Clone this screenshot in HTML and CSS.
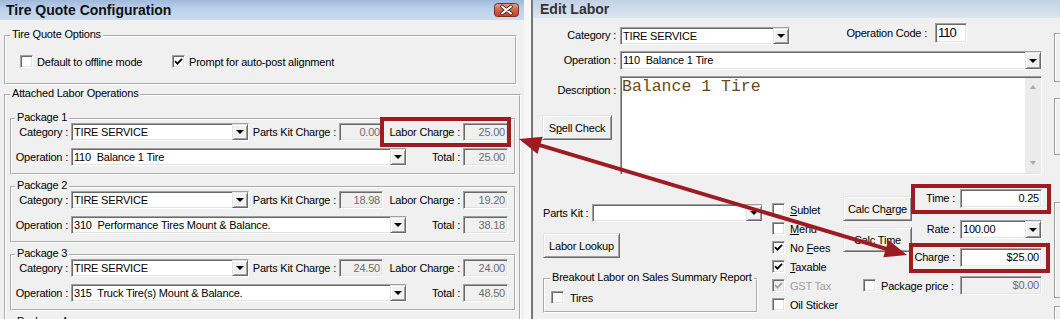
FILE: index.html
```html
<!DOCTYPE html>
<html lang="en">
<head>
    <meta charset="UTF-8">
    <title>Tire Quote Configuration - Edit Labor</title>
    <link rel="stylesheet" href="styles.css">
</head>
<body>

<div class="desk">

    <!-- left window -->
    <div class="win win-quote">
        <div class="titlebar">
            <span>Tire Quote Configuration</span>
            <span class="close-btn">
                <svg width="25" height="14" viewBox="0 0 25 14">
                    <defs>
                        <linearGradient id="closeFill" x1="0" y1="0" x2="0" y2="1">
                            <stop offset="0" stop-color="#e4a08e"/>
                            <stop offset="0.45" stop-color="#d06a52"/>
                            <stop offset="1" stop-color="#b9432b"/>
                        </linearGradient>
                    </defs>
                    <rect x="0.5" y="0.5" width="24" height="13" rx="3" fill="url(#closeFill)" stroke="#7b2e1e"/>
                    <path d="M8 3.5 L17 10.5 M17 3.5 L8 10.5" stroke="#5a2014" stroke-width="3.6" stroke-linecap="round"/>
                    <path d="M8 3.5 L17 10.5 M17 3.5 L8 10.5" stroke="#fff" stroke-width="2" stroke-linecap="round"/>
                </svg>
            </span>
        </div>

        <div class="quote-body">
            <div class="group options">
                <div class="group-title">Tire Quote Options</div>
                <div class="options-row">
                    <div class="check wide"><span class="box"></span><span>Default to offline mode</span></div>
                    <div class="check"><span class="box"><svg width="9" height="9" viewBox="0 0 9 9"><polyline points="1,4.2 3.4,6.6 8,1.8" fill="none" stroke="#000" stroke-width="1.8"/></svg></span><span>Prompt for auto-post alignment</span></div>
                </div>
            </div>

            <div class="group attached">
                <div class="group-title">Attached Labor Operations</div>

                <div class="group package">
                    <div class="group-title">Package 1</div>
                    <div class="pkg-row">
                        <span class="pkg-label">Category :</span>
                        <div class="field select cat"><span>TIRE SERVICE</span><i class="drop"></i></div>
                        <span class="pkg-label kit">Parts Kit Charge :</span>
                        <div class="field off num kit-in">0.00</div>
                        <span class="pkg-label labor">Labor Charge :</span>
                        <div class="field off num money">25.00</div>
                    </div>
                    <div class="pkg-row">
                        <span class="pkg-label">Operation :</span>
                        <div class="field select op"><span>110  Balance 1 Tire</span><i class="drop"></i></div>
                        <span class="pkg-label total">Total :</span>
                        <div class="field off num money">25.00</div>
                    </div>
                </div>

                <div class="group package">
                    <div class="group-title">Package 2</div>
                    <div class="pkg-row">
                        <span class="pkg-label">Category :</span>
                        <div class="field select cat"><span>TIRE SERVICE</span><i class="drop"></i></div>
                        <span class="pkg-label kit">Parts Kit Charge :</span>
                        <div class="field off num kit-in">18.98</div>
                        <span class="pkg-label labor">Labor Charge :</span>
                        <div class="field off num money">19.20</div>
                    </div>
                    <div class="pkg-row">
                        <span class="pkg-label">Operation :</span>
                        <div class="field select op"><span>310  Performance Tires Mount &amp; Balance.</span><i class="drop"></i></div>
                        <span class="pkg-label total">Total :</span>
                        <div class="field off num money">38.18</div>
                    </div>
                </div>

                <div class="group package">
                    <div class="group-title">Package 3</div>
                    <div class="pkg-row">
                        <span class="pkg-label">Category :</span>
                        <div class="field select cat"><span>TIRE SERVICE</span><i class="drop"></i></div>
                        <span class="pkg-label kit">Parts Kit Charge :</span>
                        <div class="field off num kit-in">24.50</div>
                        <span class="pkg-label labor">Labor Charge :</span>
                        <div class="field off num money">24.00</div>
                    </div>
                    <div class="pkg-row">
                        <span class="pkg-label">Operation :</span>
                        <div class="field select op"><span>315  Truck Tire(s) Mount &amp; Balance.</span><i class="drop"></i></div>
                        <span class="pkg-label total">Total :</span>
                        <div class="field off num money">48.50</div>
                    </div>
                </div>

                <div class="group package">
                    <div class="group-title">Package 4</div>
                </div>
            </div>
        </div>
    </div>

    <!-- right window -->
    <div class="win win-labor">
        <div class="titlebar">Edit Labor</div>

        <div class="labor-body">
            <div class="labor-main">
                <div class="lrow top-row">
                    <span class="llabel">Category :</span>
                    <div class="field select l-cat"><span>TIRE SERVICE</span><i class="drop"></i></div>
                    <span class="code-label">Operation Code :</span>
                    <div class="field code">110</div>
                </div>

                <div class="lrow op-row">
                    <span class="llabel">Operation :</span>
                    <div class="field select l-op"><span>110  Balance 1 Tire</span><i class="drop"></i></div>
                </div>

                <div class="lrow desc-row">
                    <div class="desc-side">
                        <span class="llabel">Description :</span>
                        <div class="btn spell"><span>S<u>p</u>ell Check</span></div>
                    </div>
                    <div class="field memo">
                        <div class="memo-text">Balance 1 Tire</div>
                        <div class="vscroll"><i class="up"></i><i class="down"></i></div>
                    </div>
                </div>

                <div class="lower">
                    <div class="lower-left">
                        <div class="kit-row">
                            <span class="kit-label">Parts Kit :</span>
                            <div class="field select kit-sel"><span></span><i class="drop"></i></div>
                        </div>
                        <div class="btn lookup"><span>Labor Lookup</span></div>
                        <div class="group breakout">
                            <div class="group-title">Breakout Labor on Sales Summary Report</div>
                            <div class="check"><span class="box"></span><span>Tires</span></div>
                        </div>
                    </div>

                    <div class="flags">
                        <div class="check"><span class="box"></span><span><u>S</u>ublet</span></div>
                        <div class="check"><span class="box"></span><span><u>M</u>enu</span></div>
                        <div class="check"><span class="box"><svg width="9" height="9" viewBox="0 0 9 9"><polyline points="1,4.2 3.4,6.6 8,1.8" fill="none" stroke="#000" stroke-width="1.8"/></svg></span><span>No <u>F</u>ees</span></div>
                        <div class="check"><span class="box"><svg width="9" height="9" viewBox="0 0 9 9"><polyline points="1,4.2 3.4,6.6 8,1.8" fill="none" stroke="#000" stroke-width="1.8"/></svg></span><span><u>T</u>axable</span></div>
                        <div class="check disabled"><span class="box"><svg width="9" height="9" viewBox="0 0 9 9"><polyline points="1,4.2 3.4,6.6 8,1.8" fill="none" stroke="#a0a0a0" stroke-width="1.8"/></svg></span><span>GST Tax</span></div>
                        <div class="check"><span class="box"></span><span>Oil Sticker</span></div>
                    </div>

                    <div class="calc">
                        <div class="calc-top">
                            <div class="calc-btns">
                                <div class="btn"><span>Calc Ch<u>a</u>rge</span></div>
                                <div class="btn"><span>Calc Time</span></div>
                            </div>
                            <div class="calc-fields">
                                <div class="calc-row">
                                    <span class="calc-label">Time :</span>
                                    <div class="field num">0.25</div>
                                </div>
                                <div class="calc-row">
                                    <span class="calc-label">Rate :</span>
                                    <div class="field select"><span>100.00</span><i class="drop"></i></div>
                                </div>
                                <div class="calc-row">
                                    <span class="calc-label">Charge :</span>
                                    <div class="field num">$25.00</div>
                                </div>
                            </div>
                        </div>
                        <div class="package-row">
                            <span class="box"></span>
                            <span class="pp-label">Package price :</span>
                            <div class="field off num">$0.00</div>
                        </div>
                    </div>
                </div>
            </div>

            <div class="side-strip"><i></i><i></i><i></i><i></i></div>
        </div>
    </div>

    <!-- annotation layer drawn over both windows -->
    <svg class="marks" width="1060" height="319" viewBox="0 0 1060 319">
        <g fill="none" stroke="#9c1c22" stroke-width="4">
            <rect x="382" y="119" width="127" height="26"/>
            <rect x="913" y="186" width="136" height="26"/>
            <rect x="911" y="245" width="137" height="26"/>
            <line x1="538" y1="144.7" x2="888" y2="249.3"/>
        </g>
        <g fill="#9c1c22">
            <polygon points="519,139 537.5,153.9 542.7,136.7"/>
            <polygon points="907,255 883.3,257.3 888.5,240.1"/>
        </g>
    </svg>
</div>

</body>
</html>
```

FILE: styles.css
```css
* {
    box-sizing: border-box;
}

body {
    margin: 0;
    width: 1060px;
    height: 319px;
    overflow: hidden;
    background: #f7f7f7;
    font-family: "Liberation Sans", Arial, sans-serif;
    font-size: 11px;
    letter-spacing: -0.2px;
    color: #000;
}

.desk {
    position: relative;
    display: flex;
    height: 319px;
}

.win {
    height: 319px;
    overflow: hidden;
    background: #f0f0f0;
}

.win-quote {
    width: 524px;
}

.win-labor {
    width: 529px;
    margin-left: 7px;
    border-left: 2px solid #777;
}

/* title bars */
.titlebar {
    display: flex;
    align-items: center;
    justify-content: space-between;
    font-size: 14px;
    font-weight: bold;
    letter-spacing: 0;
}

.win-quote .titlebar {
    height: 20px;
    padding: 0 5px 0 6px;
    background: linear-gradient(#9fb9da, #bcd1ea 45%, #cadcef);
    color: #111;
}

.win-labor .titlebar {
    height: 18px;
    padding-left: 7px;
    background: linear-gradient(#c2d2e4, #dbe6f1);
    color: #333;
}

.close-btn {
    display: flex;
}

/* group boxes */
.group {
    border: 2px groove #fff;
}

.group-title {
    display: table;
    margin: -9px 0 0 4px;
    padding: 0 2px;
    line-height: 13px;
    background: #f0f0f0;
}

/* fields */
.field {
    height: 18px;
    padding: 0 2px;
    line-height: 16px;
    background: #fff;
    border: 1px solid;
    border-color: #a0a0a0 #fff #fff #a0a0a0;
    box-shadow: inset 1px 1px #696969, inset -1px -1px #e3e3e3;
    white-space: pre;
    overflow: hidden;
}

.field.off {
    background: #f0f0f0;
    color: #6d6d6d;
}

.num {
    text-align: right;
}

.select {
    display: flex;
    padding-right: 0;
}

.select span {
    flex: 1;
    overflow: hidden;
}

.drop {
    flex: none;
    width: 16px;
    display: flex;
    align-items: center;
    justify-content: center;
    background: #f0f0f0;
    border: 1px solid;
    border-color: #e3e3e3 #696969 #696969 #e3e3e3;
    box-shadow: inset 1px 1px #fff, inset -1px -1px #a0a0a0;
}

.drop::after {
    content: "";
    border-style: solid;
    border-width: 4px 4px 0;
    border-color: #000 transparent transparent;
}

.btn {
    height: 25px;
    display: flex;
    align-items: center;
    justify-content: center;
    background: #f0f0f0;
    border: 1px solid;
    border-color: #e3e3e3 #696969 #696969 #e3e3e3;
    box-shadow: inset 1px 1px #fff, inset -1px -1px #a0a0a0;
    white-space: nowrap;
}

/* check boxes */
.check {
    display: flex;
    align-items: center;
    white-space: nowrap;
}

.box {
    flex: none;
    width: 13px;
    height: 13px;
    margin-right: 5px;
    display: flex;
    align-items: center;
    justify-content: center;
    background: #fff;
    border: 1px solid;
    border-color: #a0a0a0 #fff #fff #a0a0a0;
    box-shadow: inset 1px 1px #696969, inset -1px -1px #e3e3e3;
}

.check.disabled {
    color: #a0a0a0;
}

.check.disabled .box {
    background: #f0f0f0;
}

/* tire quote window */
.quote-body {
    padding: 15px 0 0 4px;
}

.options {
    width: 513px;
}

.options-row {
    display: flex;
    margin-top: 14px;
    padding: 0 0 15px 14px;
}

.options-row .box {
    margin-right: 4px;
}

.options-row .wide {
    width: 152px;
}

.attached {
    width: 517px;
    margin-top: 9px;
}

.package {
    width: 506px;
    margin: 11px 0 0 4px;
    padding-bottom: 7px;
}

.group-title + .package {
    margin-top: 18px;
}

.package .group-title {
    margin: -9px 0 -1px 3px;
}

.pkg-row {
    display: flex;
    height: 18px;
}

.pkg-row + .pkg-row {
    margin-top: 7px;
}

.pkg-label {
    flex: none;
    width: 59px;
    padding-right: 3px;
    line-height: 18px;
    text-align: right;
    white-space: nowrap;
}

.pkg-label.kit {
    width: 90px;
}

.pkg-label.labor {
    width: 80px;
}

.pkg-label.total {
    width: 56px;
}

.cat {
    width: 178px;
}

.op {
    width: 336px;
}

.kit-in {
    width: 44px;
}

.money {
    width: 45px;
}

/* edit labor window */
.labor-body {
    display: flex;
    padding-top: 5px;
}

.labor-main {
    flex: none;
    width: 514px;
}

.lrow {
    display: flex;
    align-items: flex-start;
}

.llabel {
    flex: none;
    display: block;
    width: 87px;
    padding-right: 4px;
    line-height: 16px;
    text-align: right;
}

.top-row .llabel {
    margin-top: 4px;
}

.l-cat {
    width: 170px;
    margin-top: 4px;
}

.code-label {
    width: 145px;
    padding-right: 8px;
    line-height: 20px;
    text-align: right;
}

.code {
    width: 32px;
    height: 20px;
    line-height: 18px;
    font-size: 13px;
    letter-spacing: -1px;
}

.op-row {
    margin-top: 6px;
}

.op-row .llabel {
    line-height: 19px;
}

.l-op {
    width: 422px;
    height: 19px;
}

.desc-row {
    margin-top: 6px;
}

.desc-side {
    width: 87px;
}

.desc-side .llabel {
    margin-top: 6px;
}

.spell {
    width: 70px;
    margin: 17px 0 0 9px;
}

.memo {
    display: flex;
    width: 422px;
    height: 99px;
    padding: 0 0 0 1px;
}

.memo-text {
    flex: 1;
    font-family: "Liberation Mono", "Courier New", monospace;
    font-size: 16.5px;
    line-height: 20px;
    letter-spacing: 0;
    color: #6b4a18;
}

.vscroll {
    flex: none;
    width: 16px;
    margin: 1px 0;
    padding: 7px 0 8px;
    display: flex;
    flex-direction: column;
    justify-content: space-between;
    align-items: center;
    background: #ebebeb;
}

.vscroll .up {
    border-style: solid;
    border-width: 0 3.5px 4px;
    border-color: transparent transparent #a8a8a8;
}

.vscroll .down {
    border-style: solid;
    border-width: 4px 3.5px 0;
    border-color: #a8a8a8 transparent transparent;
}

.lower {
    display: flex;
    align-items: flex-start;
}

.lower-left {
    flex: none;
    width: 220px;
    margin-left: 10px;
}

.kit-row {
    display: flex;
    margin-top: 29px;
}

.kit-label {
    width: 49px;
    line-height: 18px;
}

.kit-sel {
    width: 171px;
}

.lookup {
    width: 77px;
    margin-top: 11px;
}

.breakout {
    width: 215px;
    margin-top: 20px;
    padding-bottom: 7px;
}

.breakout .group-title {
    margin-left: 5px;
}

.breakout .check {
    margin-top: 7px;
    padding-left: 6px;
}

.breakout .box {
    margin-right: 6px;
}

.flags {
    flex: none;
    width: 71px;
    margin: 25px 0 0 9px;
}

.flags .check {
    height: 19px;
}

.calc {
    flex: none;
    width: 199px;
    margin-top: 14px;
}

.calc-top {
    display: flex;
}

.calc-btns {
    width: 69px;
    padding-top: 7px;
}

.calc-btns .btn + .btn {
    margin-top: 6px;
}

.calc-fields {
    width: 130px;
}

.calc-row {
    display: flex;
    height: 19px;
}

.calc-row + .calc-row {
    margin-top: 9px;
}

.calc-row:first-child + .calc-row {
    margin-top: 12px;
}

.calc-label {
    width: 48px;
    padding-right: 5px;
    line-height: 19px;
    text-align: right;
}

.calc-row .field,
.package-row .field {
    width: 82px;
    height: 19px;
    line-height: 17px;
}

.package-row {
    display: flex;
    align-items: center;
    height: 19px;
    margin-top: 9px;
}

.package-row .box {
    margin: 0 0 0 20px;
}

.pp-label {
    flex: 1;
    padding-left: 5px;
    white-space: nowrap;
}

.side-strip {
    flex: none;
    width: 10px;
    margin-left: 7px;
}

.side-strip i {
    display: block;
    border: 1px solid #a0a0a0;
    border-right: 0;
    box-shadow: inset 1px 1px #fff;
}

.side-strip i:nth-child(1) {
    margin-top: 10px;
    height: 49px;
}

.side-strip i:nth-child(2) {
    margin-top: 16px;
    height: 57px;
}

.side-strip i:nth-child(3) {
    margin-top: 47px;
    height: 96px;
}

.side-strip i:nth-child(4) {
    margin-top: 8px;
    height: 30px;
}

/* red callouts */
.marks {
    position: absolute;
    left: 0;
    top: 0;
    pointer-events: none;
}
```
